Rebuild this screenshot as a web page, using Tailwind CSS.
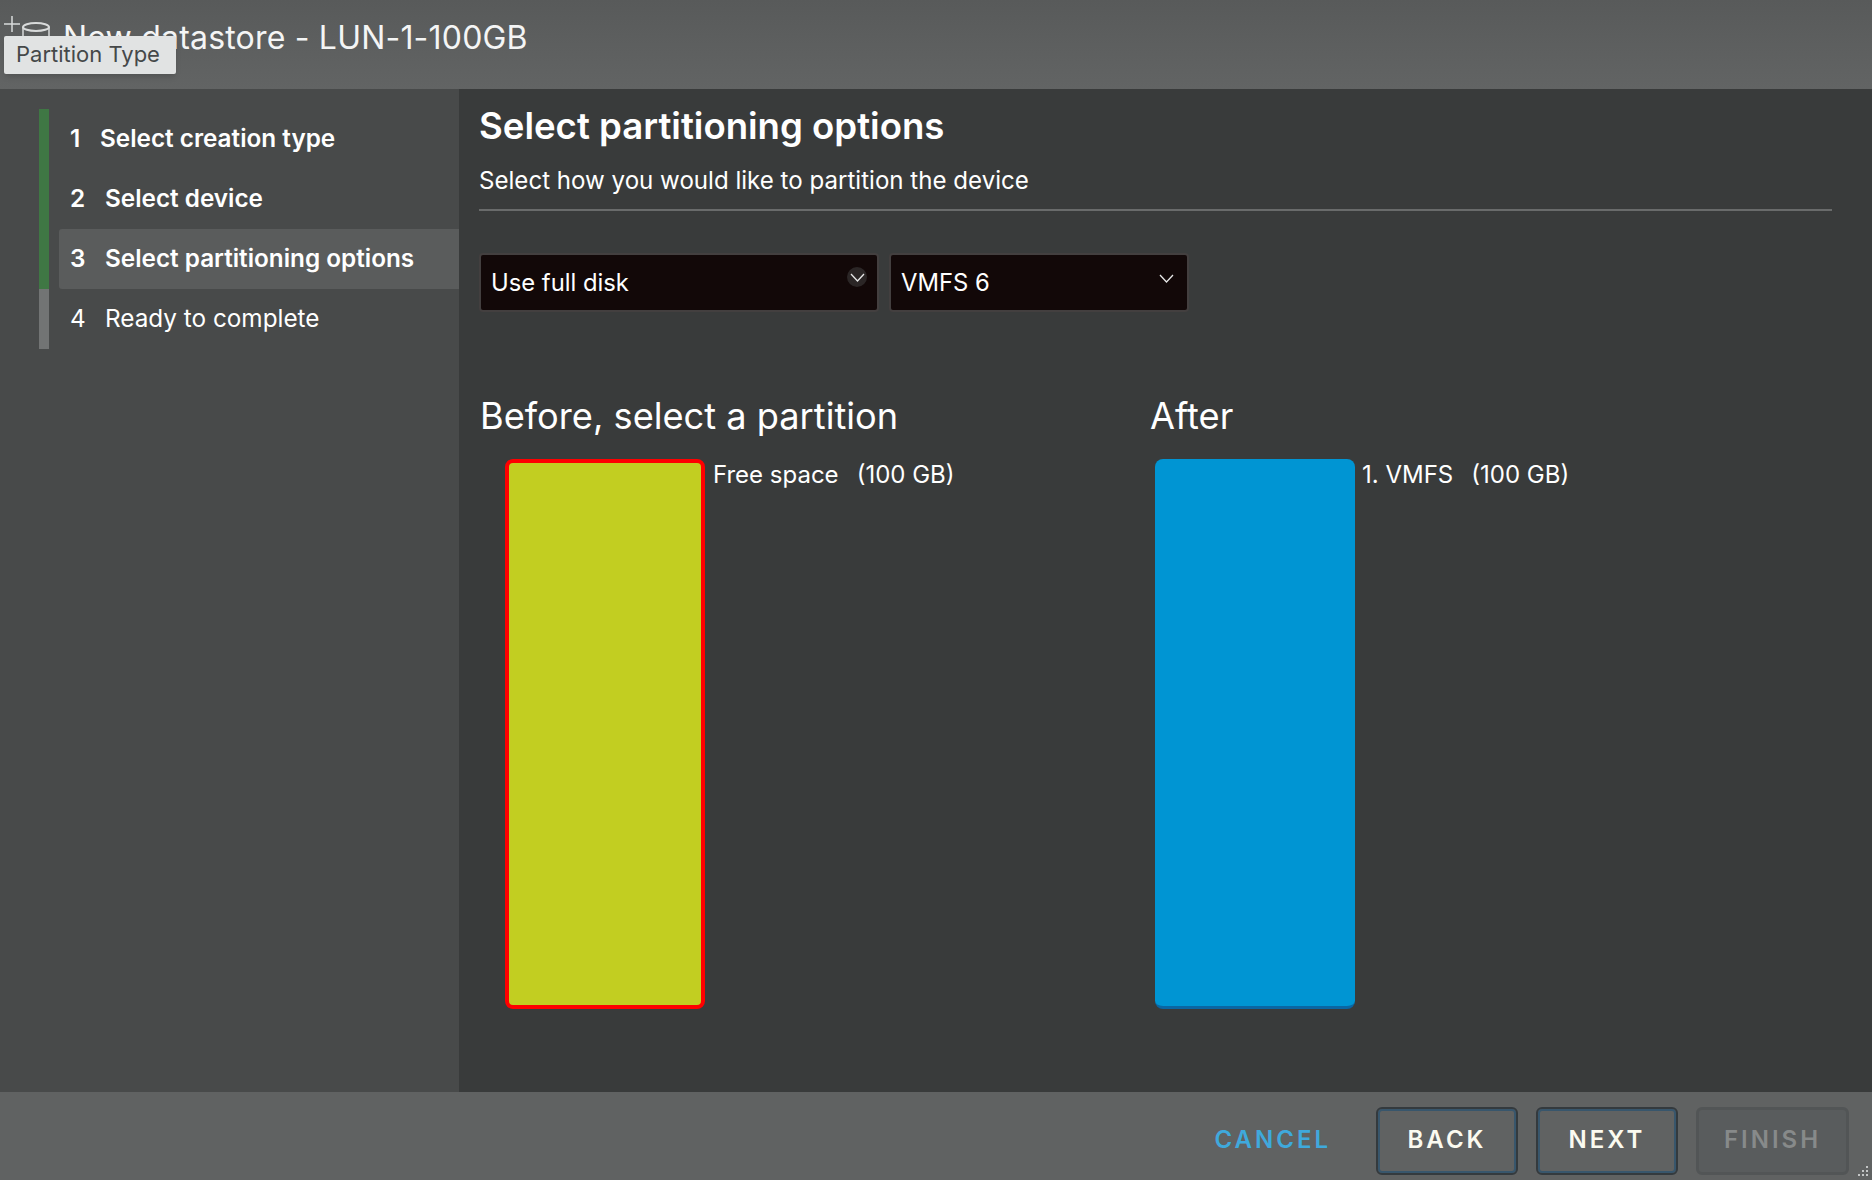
<!DOCTYPE html>
<html lang="en">
<head>
    <meta charset="UTF-8">
    <title>New datastore - LUN-1-100GB</title>
    <script src="https://cdn.jsdelivr.net/npm/@tailwindcss/browser@4"></script>
</head>
<body class="bg-[#393b3b] font-['Inter',sans-serif] text-white overflow-hidden">
    <div class="relative flex h-[1180px] w-[1872px] flex-col">
        <!-- header -->
        <header class="flex h-[89px] shrink-0 items-center bg-gradient-to-b from-[#585a5a] to-[#626464] pl-[3px]">
            <svg class="mb-auto h-[44px] w-[60px] shrink-0" viewBox="0 0 60 44" fill="none" stroke="#d8dada" stroke-width="1.5">
                <path d="M9 16v16M1 24h16"/>
                <path d="M20 27v17M46 27v17"/>
                <ellipse cx="33" cy="27" rx="13" ry="4" stroke-width="2"/>
            </svg>
            <h1 class="mb-[14px] text-[32px] tracking-[0.2px] text-[#f4f5f5]">New datastore - LUN-1-100GB</h1>
        </header>

        <div class="absolute left-[4px] top-[36px] flex h-[38px] w-[172px] items-center rounded-[2px] bg-[#e1e3e3] pb-[2px] pl-[12px] text-[22px] text-[#454849] shadow-md">Partition Type</div>

        <div class="flex min-h-0 flex-1">
            <!-- steps -->
            <nav class="flex w-[459px] shrink-0 bg-[#484a4a] pl-[39px] pt-[20px]">
                <div class="flex h-[240px] w-[10px] shrink-0 flex-col">
                    <div class="h-[180px] bg-[#3f7744]"></div>
                    <div class="h-[60px] bg-[#727474]"></div>
                </div>
                <ol class="ml-[10px] flex-1 text-[24.3px]">
                    <li class="flex h-[60px] items-center pb-[2px] pl-[11px] font-semibold"><span class="w-[30px]">1</span>Select creation type</li>
                    <li class="flex h-[60px] items-center pb-[2px] pl-[11px] font-semibold"><span class="w-[35px]">2</span>Select device</li>
                    <li class="flex h-[60px] items-center rounded-l-[3px] bg-[#5a5c5c] pb-[2px] pl-[11px] font-semibold"><span class="w-[35px]">3</span>Select partitioning options</li>
                    <li class="flex h-[60px] items-center pb-[2px] pl-[11px]"><span class="w-[35px]">4</span>Ready to complete</li>
                </ol>
            </nav>

            <!-- content -->
            <main class="flex-1 bg-[#393b3b] pl-[20px] pr-[40px]">
                <h2 class="mt-[14px] h-[46px] text-[36.6px] font-semibold leading-[46px]">Select partitioning options</h2>
                <p class="mt-[16px] h-[32px] text-[24.1px] leading-[32px]">Select how you would like to partition the device</p>
                <div class="mt-[12px] h-[2px] bg-[#696b6b]"></div>

                <div class="mt-[42px] flex gap-[10px] text-[23.8px]">
                    <div class="relative flex h-[59px] w-[400px] items-center rounded-[4px] border-2 border-[#433f3f] bg-[#120808] pl-[10px]">
                        Use full disk
                        <span class="absolute left-[366px] top-[12px] flex h-[20px] w-[20px] items-center justify-center rounded-full bg-[#2b2626]">
                            <svg class="h-[9px] w-[15px]" viewBox="0 0 15 9" fill="none" stroke="#e8e8e8" stroke-width="1.3"><path d="M1 1l6.5 7L14 1"/></svg>
                        </span>
                    </div>
                    <div class="relative flex h-[59px] w-[300px] items-center rounded-[4px] border-2 border-[#433f3f] bg-[#120808] pl-[10px]">
                        VMFS 6
                        <span class="absolute left-[265px] top-[13px] flex h-[20px] w-[20px] items-center justify-center">
                            <svg class="h-[9px] w-[15px]" viewBox="0 0 15 9" fill="none" stroke="#e8e8e8" stroke-width="1.3"><path d="M1 1l6.5 7L14 1"/></svg>
                        </span>
                    </div>
                </div>

                <div class="mt-[82px] flex">
                    <section class="w-[671px] shrink-0">
                        <h3 class="h-[44px] pl-[1px] text-[36.2px] font-normal leading-[44px]">Before, select a partition</h3>
                        <div class="ml-[26px] mt-[21px] flex">
                            <div class="h-[550px] w-[200px] shrink-0 rounded-[8px] border-[4px] border-[#ff0000] bg-[#c2ce21]"></div>
                            <p class="ml-[8px] mt-[1px] text-[24px] leading-[30px]">Free space<span class="ml-[18px]">(100 GB)</span></p>
                        </div>
                    </section>
                    <section>
                        <h3 class="h-[44px] text-[36.2px] font-normal leading-[44px]">After</h3>
                        <div class="ml-[5px] mt-[21px] flex">
                            <div class="h-[550px] w-[200px] shrink-0 rounded-[8px] border-b-[3px] border-[#0a66a3] bg-[#0095d3]"></div>
                            <p class="ml-[7px] mt-[1px] text-[24px] leading-[30px]">1. VMFS<span class="ml-[18px]">(100 GB)</span></p>
                        </div>
                    </section>
                </div>
            </main>
        </div>

        <!-- footer -->
        <footer class="relative flex h-[88px] shrink-0 items-start justify-end bg-[#606262] pr-[23px] pt-[15px] text-[24px] font-semibold tracking-[3px]">
            <button class="mr-[45px] h-[66px] text-[#3fa9dc]">CANCEL</button>
            <button class="mr-[18px] h-[68px] w-[142px] rounded-[6px] border-2 border-[#343a3e] pb-[2px] text-[#fbfaf0] shadow-[inset_0_0_0_2px_#38566c]">BACK</button>
            <button class="mr-[18px] h-[68px] w-[142px] rounded-[6px] border-2 border-[#343a3e] pb-[2px] text-[#fbfaf0] shadow-[inset_0_0_0_2px_#38566c]">NEXT</button>
            <button class="h-[68px] w-[153px] rounded-[6px] border-[3px] border-[#525556] bg-[#595c5d] pb-[2px] text-[#878a8a]">FINISH</button>
            <svg class="absolute bottom-[2px] right-[2px] h-[14px] w-[14px]" viewBox="0 0 14 14" fill="#c4c6c6">
                <rect x="10" y="2" width="2" height="2"/><rect x="6" y="6" width="2" height="2"/><rect x="10" y="6" width="2" height="2"/>
                <rect x="2" y="10" width="2" height="2"/><rect x="6" y="10" width="2" height="2"/><rect x="10" y="10" width="2" height="2"/>
            </svg>
        </footer>
    </div>
</body>
</html>
